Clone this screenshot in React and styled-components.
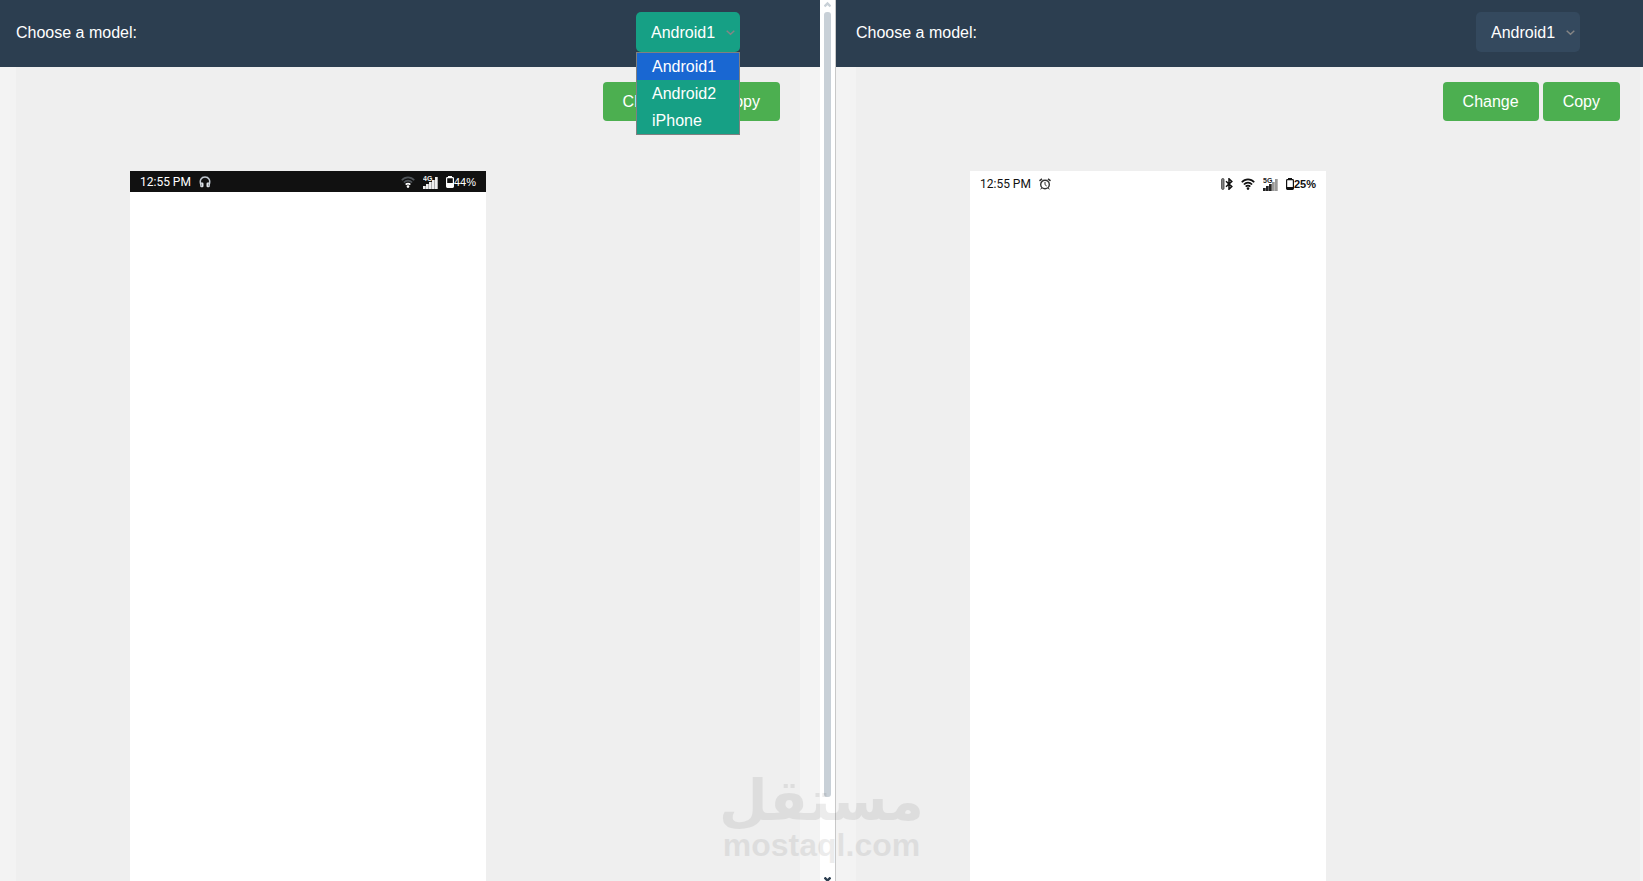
import React, { useState } from 'react'
import styled, { createGlobalStyle } from 'styled-components'

const models = ['Android1', 'Android2', 'iPhone']

const Chevron = () => (
  <ChevronSvg width='9' height='6' viewBox='0 0 9 6'>
    <path d='M0.7 0.8 L4.5 4.2 L8.3 0.8' fill='none' stroke='#858585' strokeWidth='1.5' />
  </ChevronSvg>
)

const ModelSelect = ({ id, defaultOpen }) => {
  const [model, setModel] = useState(models[0])
  const [open, setOpen] = useState(defaultOpen)
  const choose = (name) => {
    setModel(name)
    setOpen(false)
  }
  return (
    <SelectBox>
      <Select
        id={id}
        $active={open}
        value={model}
        onChange={(e) => choose(e.target.value)}
      >
        {models.map((name) => (
          <option key={name}>{name}</option>
        ))}
      </Select>
      <Chevron />
      {open && (
        <List role='listbox' aria-label='Models'>
          {models.map((name) => (
            <Item
              key={name}
              role='option'
              aria-selected={name === model}
              $selected={name === model}
              onClick={() => choose(name)}
            >
              {name}
            </Item>
          ))}
        </List>
      )}
    </SelectBox>
  )
}

const Headphones = () => (
  <svg width='12' height='12' viewBox='0 0 12 12' fill='none'>
    <path d='M2 9 C0 4 2.5 1 6 1 C9.5 1 12 4 10 9' stroke='#c3cad2' strokeWidth='1.5' />
    <rect x='1.2' y='6.5' width='3.3' height='4.8' rx='1.2' fill='#dfe3e8' />
    <rect x='7.5' y='6.5' width='3.3' height='4.8' rx='1.2' fill='#dfe3e8' />
    <path d='M2.4 7.6 V10.2 M9.6 7.6 V10.2' stroke='#6d7680' strokeWidth='0.7' />
  </svg>
)

const Alarm = () => (
  <svg width='12' height='12' viewBox='0 0 12 12' fill='none' stroke='#333'>
    <circle cx='6' cy='6.5' r='4.3' strokeWidth='1.4' />
    <path d='M0.5 2.8 L3 0.8 M11.5 2.8 L9 0.8' strokeWidth='1.6' />
    <path d='M6 4 V6.7 L7.7 8' />
    <path d='M2.8 9.8 L1.7 11.4 M9.2 9.8 L10.3 11.4' />
  </svg>
)

const Bluetooth = () => (
  <svg width='12' height='12' viewBox='0 0 12 12' fill='none'>
    <rect x='0.6' y='0.6' width='2.4' height='10.8' rx='1' fill='#888' stroke='#333' strokeWidth='0.8' />
    <path d='M5 3.3 L10.8 8.6 L8 11.2 V0.8 L10.8 3.4 L5 8.7' stroke='#111' strokeWidth='1.5' />
  </svg>
)

const Wifi = ({ color, dim }) => (
  <svg width='14' height='12' viewBox='0 0 14 12' fill='none' strokeWidth='1.7'>
    <path d='M0.8 4.2 C4.2 0.4 9.8 0.4 13.2 4.2' stroke={dim} />
    <path d='M2.9 6.5 C5.3 4 8.7 4 11.1 6.5' stroke={dim} />
    <path d='M4.7 8.7 C6 7.3 8 7.3 9.3 8.7' stroke={color} />
    <circle cx='7' cy='10.6' r='1.3' fill={color} />
  </svg>
)

const Signal = ({ label, color, dim, level }) => (
  <svg width='15' height='14' viewBox='0 0 15 14'>
    {[0, 1, 2, 3, 4].map((i) => (
      <rect
        key={i}
        x={i * 3}
        y={[11, 9, 7, 5, 2][i]}
        width='2.7'
        height={[3, 5, 7, 9, 12][i]}
        fill={i < level ? color : dim}
      />
    ))}
    <SignalText x='0' y='6' fill={color}>
      {label}
    </SignalText>
  </svg>
)

const Battery = ({ color, charge }) => (
  <svg width='8' height='12' viewBox='0 0 8 12'>
    <rect x='2' y='0' width='4' height='1.5' fill={color} />
    <rect x='0.6' y='1.6' width='6.8' height='9.8' rx='0.8' fill='none' stroke={color} strokeWidth='1.2' />
    <rect x='1' y={11 - charge} width='6' height={charge} fill={color} />
  </svg>
)

const Arrow = ({ color, down }) => (
  <ArrowSvg width='7' height='7' viewBox='0 0 7 7' $down={down}>
    <path
      d={down ? 'M0.5 0.5 L3.5 3.5 L6.5 0.5' : 'M0.5 5.5 L3.5 2.5 L6.5 5.5'}
      fill='none'
      stroke={color}
      strokeWidth='2.4'
    />
  </ArrowSvg>
)

const Pane = ({ id, side, open, status }) => (
  <PaneBox $side={side}>
    <Header>
      <Label htmlFor={id}>Choose a model:</Label>
      <ModelSelect id={id} defaultOpen={open} />
    </Header>
    <Content>
      <Buttons>
        <Button type='button'>Change</Button>
        <Button type='button'>Copy</Button>
      </Buttons>
      <Phone>{status}</Phone>
    </Content>
  </PaneBox>
)

const App = () => {
  return (
    <Page>
      <GlobalStyle />
      <Pane
        id='model-left'
        side='left'
        open
        status={
          <StatusBar $dark>
            <Time>12:55 PM</Time>
            <Headphones />
            <Icons>
              <Wifi color='#fff' dim='#50555a' />
              <Signal label='4G' color='#eee' dim='#777' level={5} />
              <Charge>
                <Battery color='#fff' charge={4} />
                <Percent>44%</Percent>
              </Charge>
            </Icons>
          </StatusBar>
        }
      />
      <Scrollbar>
        <Arrow color='#c8d0d7' />
        <Thumb />
        <Track />
        <Arrow color='#2c3e50' down />
      </Scrollbar>
      <Pane
        id='model-right'
        side='right'
        open={false}
        status={
          <StatusBar>
            <Time>12:55 PM</Time>
            <Alarm />
            <Icons>
              <Bluetooth />
              <Wifi color='#111' dim='#111' />
              <Signal label='5G' color='#222' dim='#999' level={3} />
              <Charge>
                <Battery color='#111' charge={2} />
                <Percent $bold>25%</Percent>
              </Charge>
            </Icons>
          </StatusBar>
        }
      />
      <Watermark>
        <Arabic lang='ar' dir='rtl'>
          مستقل
        </Arabic>
        <Latin>mostaql.com</Latin>
      </Watermark>
    </Page>
  )
}

export default App

const GlobalStyle = createGlobalStyle`
  * {
    box-sizing: border-box;
  }
  body {
    margin: 0;
    background-color: #f3f3f3;
    font-family: 'Liberation Sans', Arial, sans-serif;
    font-size: 16px;
  }
  svg {
    display: block;
    flex-shrink: 0;
  }
`
const Page = styled.main`
  position: relative;
  display: grid;
  grid-template-columns: minmax(0, 820fr) 16px minmax(0, 807fr);
  height: 100vh;
  overflow: hidden;
`
const PaneBox = styled.section`
  display: grid;
  grid-template-rows: auto 1fr;
  grid-template-columns: minmax(0, 1fr);
  padding: ${(props) => (props.$side === 'left' ? '0 20px 0 16px' : '0 3px 0 20px')};
  background: linear-gradient(#2c3e50 67px, #f3f3f3 67px);
`
const Header = styled.header`
  display: flex;
  align-items: center;
  justify-content: space-between;
  height: 67px;
  padding: 0 60px 3px 0;
  background-color: #2c3e50;
`
const Label = styled.label`
  padding-top: 2px;
  color: #fff;
`
const SelectBox = styled.div`
  position: relative;
  width: 104px;
`
const Select = styled.select`
  display: block;
  appearance: none;
  width: 100%;
  height: 40px;
  padding: 0 15px;
  border: 0;
  border-radius: 5px;
  outline: none;
  background-color: ${(props) => (props.$active ? '#16a085' : '#34495e')};
  color: #fff;
  font: inherit;
  cursor: pointer;
`
const ChevronSvg = styled.svg`
  position: absolute;
  top: 18px;
  right: 5px;
  pointer-events: none;
`
const List = styled.ul`
  position: absolute;
  z-index: 2;
  top: 100%;
  left: 0;
  width: 100%;
  margin: 0;
  padding: 0;
  border: 1px solid #808080;
  list-style: none;
`
const Item = styled.li`
  padding: 0 15px;
  background-color: ${(props) => (props.$selected ? '#1967d2' : '#16a085')};
  color: #fff;
  line-height: 27px;
  cursor: pointer;
`
const Content = styled.div`
  display: flex;
  flex-direction: column;
  padding: 15px 20px 0 114px;
  background-color: #efefef;
`
const Buttons = styled.div`
  display: flex;
  justify-content: flex-end;
  gap: 4px;
  margin-bottom: 50px;
`
const Button = styled.button`
  height: 39px;
  padding: 0 20px;
  border: 0;
  border-radius: 4px;
  background-color: #4caf50;
  color: #fff;
  font: inherit;
  cursor: pointer;
`
const Phone = styled.div`
  flex: 1;
  width: 100%;
  max-width: 356px;
  background-color: #fff;
`
const StatusBar = styled.div`
  display: flex;
  align-items: center;
  gap: 8px;
  height: ${(props) => (props.$dark ? '21px' : '25px')};
  padding: 0 10px;
  background-color: ${(props) => (props.$dark ? '#111' : '#fff')};
  color: ${(props) => (props.$dark ? '#fff' : '#111')};
`
const Time = styled.span`
  font-family: Roboto, sans-serif;
  font-size: 12px;
`
const Icons = styled.div`
  display: flex;
  align-items: center;
  gap: 8px;
  margin-left: auto;
`
const SignalText = styled.text`
  font-size: 7px;
  font-weight: 700;
`
const Charge = styled.div`
  display: flex;
  align-items: center;
`
const Percent = styled.span`
  font-size: 11px;
  font-weight: ${(props) => (props.$bold ? 700 : 400)};
`
const Scrollbar = styled.div`
  display: flex;
  flex-direction: column;
  align-items: center;
  height: 100vh;
  padding-top: 1px;
  border-right: 1px solid #c8c8c8;
  background-color: #fff;
`
const ArrowSvg = styled.svg`
  margin-bottom: ${(props) => (props.$down ? '-3px' : '4px')};
`
const Thumb = styled.div`
  flex: 785;
  width: 7px;
  border-radius: 3px;
  background-color: #c8d0d7;
`
const Track = styled.div`
  flex: 80;
`
const Watermark = styled.div`
  position: absolute;
  bottom: 20px;
  left: 50%;
  display: flex;
  flex-direction: column;
  align-items: center;
  transform: translateX(-50%);
  color: #000;
  font-weight: 700;
  opacity: 0.07;
  pointer-events: none;
`
const Arabic = styled.span`
  font-family: 'DejaVu Sans', sans-serif;
  font-size: 56px;
  line-height: 56px;
`
const Latin = styled.span`
  font-size: 32px;
  line-height: 32px;
`
